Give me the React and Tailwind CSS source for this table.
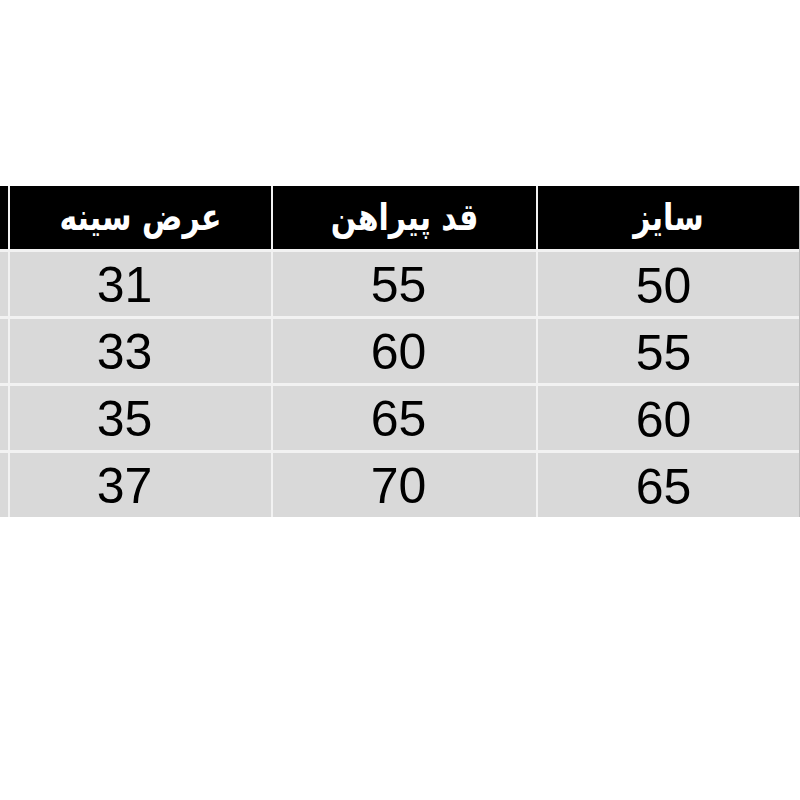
export default function App() {
  const rows = [
    ["31", "55", "50"],
    ["33", "60", "55"],
    ["35", "65", "60"],
    ["37", "70", "65"],
  ];
  const headers = ["عرض سینه", "قد پیراهن", "سایز"];
  return (
    <div className="w-[800px] h-[800px] bg-white pt-[186px]" style={{ fontFamily: '"Liberation Sans", Arial, sans-serif' }}>
      <div className="grid grid-cols-[8px_261px_263px_261px] gap-x-[2px] gap-y-[3px] bg-[#f2f2f2] border-r border-[#bdbdbd] w-[800px]">
        <div className="h-[63px] bg-black" />
        {headers.map((h) => (
          <div
            key={h}
            dir="rtl"
            className="h-[63px] bg-black flex items-center justify-center text-white text-[30px] font-bold"
            style={{ fontFamily: '"DejaVu Sans", sans-serif' }}
          >
            <span className="inline-block scale-y-[1.25] -translate-y-[1px]">{h}</span>
          </div>
        ))}
        {rows.map((r, i) => (
          <>
            <div key={"a" + i} className="h-[64px] bg-[#d9d9d9]" />
            {r.map((v, j) => (
              <div
                key={i + "-" + j}
                className="h-[64px] bg-[#d9d9d9] flex items-center justify-center text-black text-[50px] leading-none"
              >
                <span className={j === 0 ? "-translate-x-[16px] translate-y-[1px]" : j === 1 ? "-translate-x-[6px] translate-y-[1px]" : "-translate-x-[5px] translate-y-[2px]"}>{v}</span>
              </div>
            ))}
          </>
        ))}
      </div>
    </div>
  );
}
